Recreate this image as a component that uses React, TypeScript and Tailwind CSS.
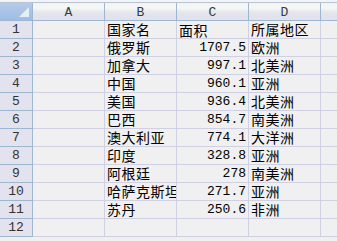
import React from "react";

const rows: [string, string, string][] = [
  ["国家名", "面积", "所属地区"],
  ["俄罗斯", "1707.5", "欧洲"],
  ["加拿大", "997.1", "北美洲"],
  ["中国", "960.1", "亚洲"],
  ["美国", "936.4", "北美洲"],
  ["巴西", "854.7", "南美洲"],
  ["澳大利亚", "774.1", "大洋洲"],
  ["印度", "328.8", "亚洲"],
  ["阿根廷", "278", "南美洲"],
  ["哈萨克斯坦", "271.7", "亚洲"],
  ["苏丹", "250.6", "非洲"],
  ["", "", ""],
];

const cjk = { fontFamily: '"Noto Sans CJK SC", sans-serif' };
const mono = { fontFamily: '"Liberation Mono", "Noto Sans CJK SC", monospace' };

export default function App() {
  return (
    <div className="w-[337px] h-[241px] overflow-hidden bg-[#f0f0f0] text-black">
      <div className="h-[3px] bg-[#f2f4f7] border-b border-[#b8c4d2]" />
      {/* header */}
      <div className="flex h-[18px] border-b border-[#9eb6ce]">
        <div className="w-[33px] shrink-0 border-r border-[#9eb6ce] bg-gradient-to-b from-[#b4cbe8] to-[#9fbde4] relative">
          <svg className="absolute right-[3px] bottom-[3px]" width="10" height="10" viewBox="0 0 10 10">
            <polygon points="10,0 10,10 0,10" fill="#e6eef8" />
          </svg>
        </div>
        {["A", "B", "C", "D", ""].map((l, i) => (
          <div
            key={i}
            className="w-[72px] shrink-0 border-r border-[#9eb6ce] bg-[linear-gradient(to_bottom,#f3f3f3_0%,#f6f6f6_30%,#e4ece8_50%,#e5e1ef_70%,#dce5ee_100%)] flex items-center justify-center text-[13px] text-[#2f3c42] leading-none pt-[2px]"
            style={mono}
          >
            {l}
          </div>
        ))}
      </div>
      {rows.map((r, i) => (
        <div key={i} className="flex h-[18px]">
          <div
            className="w-[33px] shrink-0 border-r border-b border-[#9eb6ce] bg-[#e3e3ef] flex items-end justify-center text-[13px] leading-[16px] text-[#333]"
            style={mono}
          >
            {i + 1}
          </div>
          <div className="w-[72px] shrink-0 border-r border-b border-[#d0d0e4]" />
          <div
            className="w-[72px] shrink-0 border-r border-b border-[#d0d0e4] flex items-end pl-[2px] overflow-hidden whitespace-nowrap text-[14px] leading-[17px] tracking-[0.5px]"
            style={cjk}
          >
            {r[0]}
          </div>
          <div
            className={
              "w-[72px] shrink-0 border-r border-b border-[#d0d0e4] flex items-end overflow-hidden whitespace-nowrap leading-[16px] " +
              (i === 0 ? "pl-[2px] text-[14px] tracking-[0.5px]" : "justify-end pr-[2px] text-[13px]")
            }
            style={i === 0 ? cjk : mono}
          >
            {r[1]}
          </div>
          <div
            className="w-[72px] shrink-0 border-r border-b border-[#d0d0e4] flex items-end pl-[2px] overflow-hidden whitespace-nowrap text-[14px] leading-[17px] tracking-[0.5px]"
            style={cjk}
          >
            {r[2]}
          </div>
          <div className="w-[72px] shrink-0 border-r border-b border-[#d0d0e4]" />
        </div>
      ))}
    </div>
  );
}
